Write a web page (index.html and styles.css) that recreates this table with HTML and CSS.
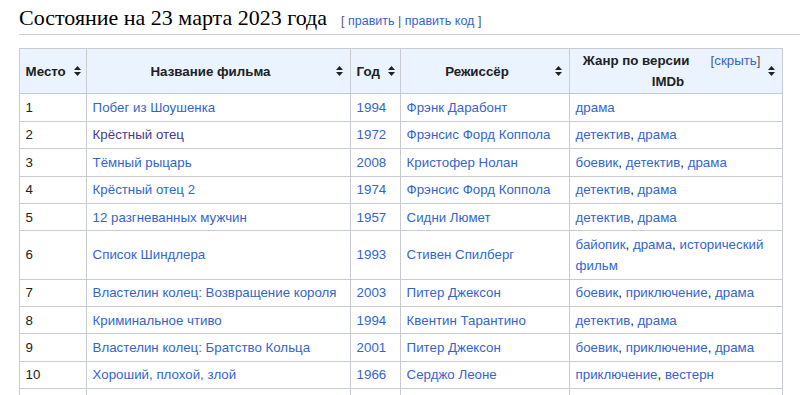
FILE: index.html
```html
<!DOCTYPE html>
<html lang="ru">
<head>
<meta charset="utf-8">
<title>Состояние на 23 марта 2023 года</title>
<link rel="stylesheet" href="styles.css">
</head>
<body>
<div class="page">
  <h2 class="section-heading">
    <span class="headline">Состояние на 23 марта 2023 года</span>
    <span class="editsection"><span class="bracket">[</span> <a href="#">править</a> <span class="divider">|</span> <a href="#">править код</a> <span class="bracket">]</span></span>
  </h2>

  <table class="wikitable">
    <colgroup>
      <col class="c-place">
      <col class="c-title">
      <col class="c-year">
      <col class="c-dir">
      <col class="c-genre">
    </colgroup>
    <thead>
      <tr>
        <th class="th-left"><div class="th-inner"><span class="th-label">Место</span><svg class="sort" viewBox="0 0 7 10" width="7" height="10"><path d="M0 4 L3.5 0 L7 4 Z M0 6 L3.5 10 L7 6 Z"/></svg></div></th>
        <th><div class="th-inner"><span class="th-label">Название фильма</span><svg class="sort" viewBox="0 0 7 10" width="7" height="10"><path d="M0 4 L3.5 0 L7 4 Z M0 6 L3.5 10 L7 6 Z"/></svg></div></th>
        <th><div class="th-inner"><span class="th-label">Год</span><svg class="sort" viewBox="0 0 7 10" width="7" height="10"><path d="M0 4 L3.5 0 L7 4 Z M0 6 L3.5 10 L7 6 Z"/></svg></div></th>
        <th><div class="th-inner"><span class="th-label">Режиссёр</span><svg class="sort" viewBox="0 0 7 10" width="7" height="10"><path d="M0 4 L3.5 0 L7 4 Z M0 6 L3.5 10 L7 6 Z"/></svg></div></th>
        <th><div class="th-inner"><span class="th-label"><span class="toggle">[<a href="#">скрыть</a>]</span>Жанр по версии IMDb</span><svg class="sort" viewBox="0 0 7 10" width="7" height="10"><path d="M0 4 L3.5 0 L7 4 Z M0 6 L3.5 10 L7 6 Z"/></svg></div></th>
      </tr>
    </thead>
    <tbody>
      <tr><td>1</td><td><a href="#">Побег из Шоушенка</a></td><td><a href="#">1994</a></td><td><a href="#">Фрэнк Дарабонт</a></td><td><a href="#">драма</a></td></tr>
      <tr><td>2</td><td><a href="#" class="visited">Крёстный отец</a></td><td><a href="#">1972</a></td><td><a href="#">Фрэнсис Форд Коппола</a></td><td><a href="#">детектив</a>, <a href="#">драма</a></td></tr>
      <tr><td>3</td><td><a href="#">Тёмный рыцарь</a></td><td><a href="#">2008</a></td><td><a href="#">Кристофер Нолан</a></td><td><a href="#">боевик</a>, <a href="#">детектив</a>, <a href="#">драма</a></td></tr>
      <tr><td>4</td><td><a href="#">Крёстный отец 2</a></td><td><a href="#">1974</a></td><td><a href="#">Фрэнсис Форд Коппола</a></td><td><a href="#">детектив</a>, <a href="#">драма</a></td></tr>
      <tr><td>5</td><td><a href="#">12 разгневанных мужчин</a></td><td><a href="#">1957</a></td><td><a href="#">Сидни Люмет</a></td><td><a href="#">детектив</a>, <a href="#">драма</a></td></tr>
      <tr><td>6</td><td><a href="#">Список Шиндлера</a></td><td><a href="#">1993</a></td><td><a href="#">Стивен Спилберг</a></td><td><a href="#">байопик</a>, <a href="#">драма</a>, <a href="#">исторический фильм</a></td></tr>
      <tr><td>7</td><td><a href="#">Властелин колец: Возвращение короля</a></td><td><a href="#">2003</a></td><td><a href="#">Питер Джексон</a></td><td><a href="#">боевик</a>, <a href="#">приключение</a>, <a href="#">драма</a></td></tr>
      <tr><td>8</td><td><a href="#">Криминальное чтиво</a></td><td><a href="#">1994</a></td><td><a href="#">Квентин Тарантино</a></td><td><a href="#">детектив</a>, <a href="#">драма</a></td></tr>
      <tr><td>9</td><td><a href="#">Властелин колец: Братство Кольца</a></td><td><a href="#">2001</a></td><td><a href="#">Питер Джексон</a></td><td><a href="#">боевик</a>, <a href="#">приключение</a>, <a href="#">драма</a></td></tr>
      <tr><td>10</td><td><a href="#">Хороший, плохой, злой</a></td><td><a href="#">1966</a></td><td><a href="#">Серджо Леоне</a></td><td><a href="#">приключение</a>, <a href="#">вестерн</a></td></tr>
      <tr><td>11</td><td><a href="#">Форрест Гамп</a></td><td><a href="#">1994</a></td><td><a href="#">Роберт Земекис</a></td><td><a href="#">драма</a>, <a href="#">мелодрама</a></td></tr>
    </tbody>
  </table>
</div>
</body>
</html>
```

FILE: styles.css
```css
html, body {
  margin: 0;
  padding: 0;
  background: #ffffff;
}

body {
  font-family: "Liberation Sans", Arial, sans-serif;
  font-size: 13.3px;
  color: #202122;
}

a {
  color: #3366cc;
  text-decoration: none;
}

a.visited {
  color: #4a3890;
}

.page {
  padding: 5px 0 0 19px;
  overflow: hidden;
}

.section-heading {
  margin: 0;
  font-weight: normal;
  border-bottom: 1px solid #c8ccd1;
  display: flex;
  align-items: baseline;
  line-height: 26px;
}

.headline {
  font-family: "Liberation Serif", Georgia, "Times New Roman", serif;
  font-size: 22px;
  color: #000000;
}

.editsection {
  font-family: "Liberation Sans", Arial, sans-serif;
  font-size: 12.5px;
  margin-left: 14px;
  color: #54595d;
}

.wikitable {
  margin-top: 13px;
  border-collapse: collapse;
  table-layout: fixed;
  width: 764px;
  border: 1px solid #a2a9b1;
  background: #ffffff;
}

.c-place { width: 67px; }
.c-title { width: 264px; }
.c-year  { width: 50px; }
.c-dir   { width: 169px; }
.c-genre { width: 213px; }

.wikitable th,
.wikitable td {
  border: 1px solid #c8ccd1;
  padding: 2.7px 5.6px;
  line-height: 21px;
  vertical-align: middle;
}

.wikitable th {
  background: #eaf3ff;
  font-weight: bold;
  text-align: center;
  padding-top: 1.2px;
  padding-bottom: 1.2px;
}

.th-inner {
  display: flex;
  align-items: center;
}

.th-label {
  flex: 1;
  text-align: center;
  line-height: 21px;
}

.th-left .th-label {
  text-align: left;
}

.sort {
  display: block;
  flex: none;
  margin-left: 8px;
  margin-right: 1px;
  fill: #202122;
}

.toggle {
  float: right;
  font-weight: normal;
  color: #54595d;
  margin-left: 14px;
}

.wikitable td {
  text-align: left;
}
```
